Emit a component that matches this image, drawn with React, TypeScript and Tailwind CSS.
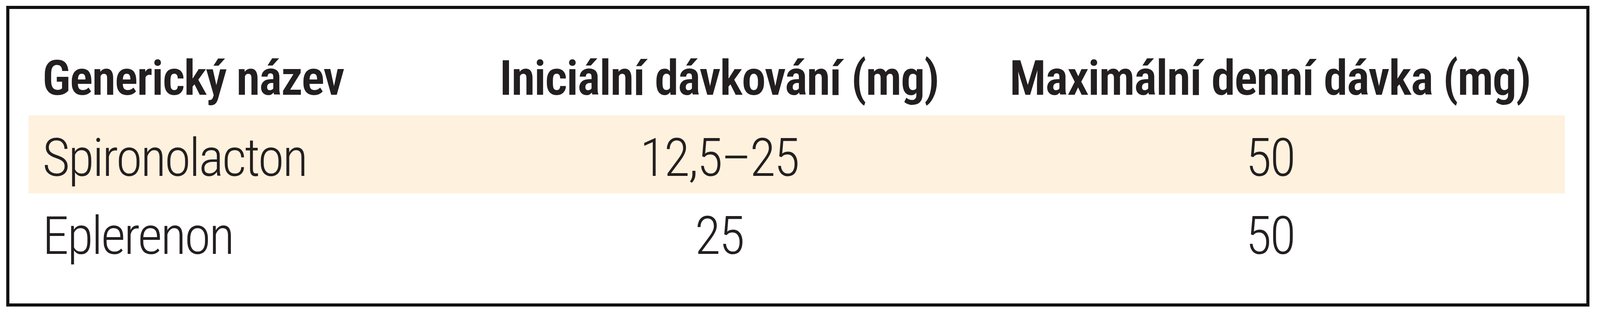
const rows = [
  { name: "Spironolacton", initial: "12,5–25", max: "50", shaded: true },
  { name: "Eplerenon", initial: "25", max: "50", shaded: false },
];

// column proportions taken from the reference table
const cols = "grid grid-cols-[1506fr_1776fr_2044fr]";

export default function App() {
  return (
    <div className="w-full h-[800px] bg-white pt-[15px] pl-[0.4%] pr-[0.67%] font-['Roboto_Condensed','Roboto',sans-serif] text-[#231f20]">
      <div className="h-[771px] border-[8px] border-[#111111] pl-[1.2%] pr-[1.35%] pt-[73px]">
        {/* header */}
        <div className={`${cols} h-[200px] text-[124px] font-semibold tracking-[-0.02em] leading-[200px]`}>
          <div className="pl-[3.2%] pt-[5px] whitespace-nowrap">Generický název</div>
          <div className="text-center pt-[5px] whitespace-nowrap">Iniciální dávkování (mg)</div>
          <div className="text-center pt-[5px] whitespace-nowrap">Maximální denní dávka (mg)</div>
        </div>
        {rows.map((r) => (
          <div
            key={r.name}
            className={`${cols} h-[200px] text-[136px] font-light tracking-[-0.03em] leading-[200px] ${r.shaded ? "bg-[#fef1dd]" : ""}`}
          >
            <div className="pl-[3.2%] pt-[9px] whitespace-nowrap">{r.name}</div>
            <div className="text-center pt-[9px] whitespace-nowrap">{r.initial}</div>
            <div className="text-center pt-[9px] whitespace-nowrap">{r.max}</div>
          </div>
        ))}
      </div>
    </div>
  );
}
